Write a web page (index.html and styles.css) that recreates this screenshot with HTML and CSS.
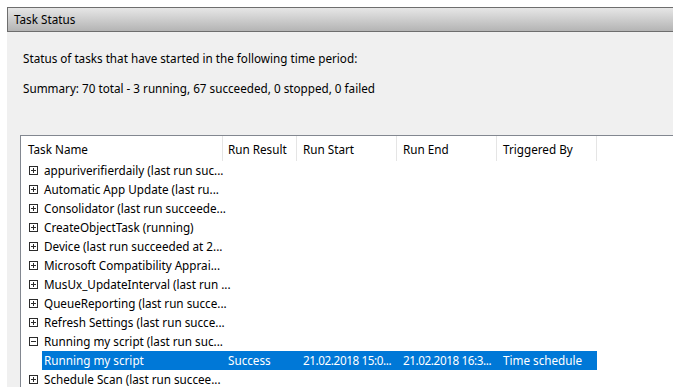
FILE: index.html
```html
<!DOCTYPE html>
<html lang="en">
<head>
    <meta charset="UTF-8">
    <title>Task Status</title>
    <link rel="stylesheet" href="styles.css">
</head>
<body>
    <div class="window">
        <div class="titlebar">Task Status</div>

        <div class="panel">
            <p class="intro">Status of tasks that have started in the following time period:</p>
            <p class="summary">Summary: 70 total - 3 running, 67 succeeded, 0 stopped, 0 failed</p>

            <div class="tasks">
                <div class="head">
                    <div class="col col-name">Task Name</div>
                    <div class="col col-result">Run Result</div>
                    <div class="col col-start">Run Start</div>
                    <div class="col col-end">Run End</div>
                    <div class="col col-trigger">Triggered By</div>
                </div>

                <div class="row"><span class="exp plus"></span><span class="label">appuriverifierdaily (last run suc...</span></div>
                <div class="row"><span class="exp plus"></span><span class="label">Automatic App Update (last ru...</span></div>
                <div class="row"><span class="exp plus"></span><span class="label">Consolidator (last run succeede...</span></div>
                <div class="row"><span class="exp plus"></span><span class="label">CreateObjectTask (running)</span></div>
                <div class="row"><span class="exp plus"></span><span class="label">Device (last run succeeded at 2...</span></div>
                <div class="row"><span class="exp plus"></span><span class="label">Microsoft Compatibility Apprai...</span></div>
                <div class="row"><span class="exp plus"></span><span class="label">MusUx_UpdateInterval (last run ...</span></div>
                <div class="row"><span class="exp plus"></span><span class="label">QueueReporting (last run succe...</span></div>
                <div class="row"><span class="exp plus"></span><span class="label">Refresh Settings (last run succe...</span></div>
                <div class="row"><span class="exp minus"></span><span class="label">Running my script (last run suc...</span></div>

                <div class="row child">
                    <div class="selected">
                        <div class="cell c-name">Running my script</div>
                        <div class="cell c-result">Success</div>
                        <div class="cell c-start date">21.02.2018 15:0...</div>
                        <div class="cell c-end date">21.02.2018 16:3...</div>
                        <div class="cell c-trigger">Time schedule</div>
                    </div>
                </div>

                <div class="row"><span class="exp plus"></span><span class="label">Schedule Scan (last run succee...</span></div>
            </div>
        </div>
    </div>
</body>
</html>
```

FILE: styles.css
```css
:root {
    --panel-bg: #f0f0f0;
    --frame: #6e6e6e;
    --grid-line: #e5e5e5;
    --list-border: #828790;
    --select-blue: #0078d7;
    --text: #000000;
}

body {
    margin: 0;
    background: #ffffff;
    font-family: "Noto Sans", "Open Sans", sans-serif;
    font-size: 11.7px;
    color: var(--text);
}

.window {
    margin: 7px 0 0 7px;
    height: 380px;
    overflow: hidden;
}

.titlebar {
    height: 23px;
    line-height: 23px;
    padding-left: 6px;
    border-top: 1px solid var(--frame);
    border-left: 1px solid var(--frame);
    border-bottom: 1px solid var(--frame);
    background: linear-gradient(#e6e6e6, #b4b4b4);
}

.panel {
    background: var(--panel-bg);
    padding: 18px 0 0 13px;
    height: 400px;
}

.panel p {
    margin: 0 0 0 3px;
    line-height: 17px;
}

.summary {
    padding-top: 13px;
}

.tasks {
    margin-top: 38px;
    background: #ffffff;
    border-top: 1px solid var(--list-border);
    border-left: 1px solid var(--list-border);
    height: 300px;
}

.head {
    display: flex;
    height: 25px;
}

.col {
    box-sizing: border-box;
    line-height: 26px;
    padding-left: 6px;
    border-right: 1px solid var(--grid-line);
    white-space: nowrap;
    overflow: hidden;
}

.col-name { width: 202px; padding-left: 7px; }
.col-result { width: 74px; padding-left: 5px; }
.col-start,
.col-end,
.col-trigger { width: 100px; }

.row {
    display: flex;
    align-items: center;
    height: 19px;
    line-height: 19px;
    white-space: nowrap;
}

.exp {
    box-sizing: border-box;
    width: 9px;
    height: 9px;
    margin: 0 6px 0 8px;
    border: 1px solid #2b2b2b;
    position: relative;
}

/* +/- drawn from two thin bars */
.exp::before,
.exp::after {
    content: "";
    position: absolute;
    background: #2b2b2b;
}

.exp::before {
    left: 1px;
    top: 3px;
    width: 5px;
    height: 1px;
}

.exp.plus::after {
    left: 3px;
    top: 1px;
    width: 1px;
    height: 5px;
}

.row.child {
    padding-left: 21px;
}

.selected {
    display: flex;
    background: var(--select-blue);
    color: #ffffff;
}

.cell {
    box-sizing: border-box;
    padding-left: 6px;
    white-space: nowrap;
}

.c-name { width: 181px; padding-left: 2px; }
.c-result { width: 74px; padding-left: 5px; }
.c-start,
.c-end,
.c-trigger { width: 100px; }

.date {
    letter-spacing: -0.4px;
}
```
